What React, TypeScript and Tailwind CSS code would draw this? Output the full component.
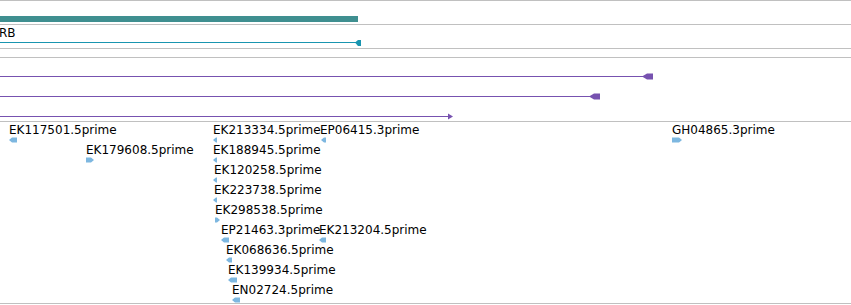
type Dir = 'left' | 'right'

interface Read {
  label: string
  x: number
  row: number
  dir: Dir
  ax: number
  aw: number
}

const reads: Read[] = [
  { label: 'EK117501.5prime', x: 9, row: 0, dir: 'left', ax: 9, aw: 8 },
  { label: 'EK213334.5prime', x: 213, row: 0, dir: 'left', ax: 213, aw: 4 },
  { label: 'EP06415.3prime', x: 320, row: 0, dir: 'left', ax: 321, aw: 5 },
  { label: 'GH04865.3prime', x: 672, row: 0, dir: 'right', ax: 672, aw: 10 },
  { label: 'EK179608.5prime', x: 86, row: 1, dir: 'right', ax: 86, aw: 8 },
  { label: 'EK188945.5prime', x: 213, row: 1, dir: 'left', ax: 213, aw: 4 },
  { label: 'EK120258.5prime', x: 214, row: 2, dir: 'left', ax: 213, aw: 4 },
  { label: 'EK223738.5prime', x: 214, row: 3, dir: 'left', ax: 213, aw: 4 },
  { label: 'EK298538.5prime', x: 215, row: 4, dir: 'right', ax: 215, aw: 5 },
  { label: 'EP21463.3prime', x: 221, row: 5, dir: 'left', ax: 221, aw: 8 },
  { label: 'EK213204.5prime', x: 319, row: 5, dir: 'left', ax: 319, aw: 7 },
  { label: 'EK068636.5prime', x: 226, row: 6, dir: 'left', ax: 226, aw: 6 },
  { label: 'EK139934.5prime', x: 228, row: 7, dir: 'left', ax: 228, aw: 9 },
  { label: 'EN02724.5prime', x: 232, row: 8, dir: 'left', ax: 232, aw: 8 },
]

function arrowPoints(x: number, y: number, w: number, dir: Dir) {
  const h = 5
  const tip = Math.min(3, w - 1)
  if (dir === 'left') {
    return `${x},${y + h / 2} ${x + tip},${y} ${x + w},${y} ${x + w},${y + h} ${x + tip},${y + h}`
  }
  return `${x},${y} ${x + w - tip},${y} ${x + w},${y + h / 2} ${x + w - tip},${y + h} ${x},${y + h}`
}

export default function App() {
  return (
    <div
      className="w-[851px] h-[305px] bg-white overflow-hidden border-t border-[#c0c0c0] text-black"
      style={{ fontFamily: '"DejaVu Sans", "Liberation Sans", sans-serif' }}
    >
      {/* gene model track */}
      <div className="relative h-[24px] border-b border-[#c0c0c0]">
        <div className="absolute left-0 top-[15px] w-[358px] h-[6px] bg-[#3f8f90]" />
      </div>

      {/* transcript track */}
      <div className="relative h-[24px] border-b border-[#c0c0c0]">
        <span className="absolute left-[-1px] top-[1px] text-[12px] leading-[14px]">RB</span>
        <svg className="absolute left-0 top-0" width="851" height="23">
          <line x1="0" y1="17.5" x2="358" y2="17.5" stroke="#1995b0" strokeWidth="1" />
          <polygon points="355,17.5 358,15 361,15 361,21 358,21" fill="#1995b0" />
        </svg>
      </div>

      <div className="h-[9px] border-b border-[#c0c0c0]" />

      {/* spliced alignments */}
      <div className="relative h-[64px] border-b border-[#c0c0c0]">
        <svg className="absolute left-0 top-0" width="851" height="63">
          <line x1="0" y1="18.5" x2="648" y2="18.5" stroke="#7752b0" strokeWidth="1" />
          <polygon points="642,18.5 647,15.5 653,15.5 653,21.5 647,21.5" fill="#7752b0" />
          <line x1="0" y1="38.5" x2="595" y2="38.5" stroke="#7752b0" strokeWidth="1" />
          <polygon points="589,38.5 594,35.5 600,35.5 600,41.5 594,41.5" fill="#7752b0" />
          <line x1="0" y1="58.5" x2="450" y2="58.5" stroke="#7752b0" strokeWidth="1" />
          <polygon points="448,55.5 453,58.5 448,61.5" fill="#7752b0" />
        </svg>
      </div>

      {/* EST reads */}
      <div className="relative h-[182px] border-b border-[#c0c0c0]">
        <svg className="absolute left-0 top-0" width="851" height="181">
          {reads.map((r) => (
            <polygon key={r.label} points={arrowPoints(r.ax, 15.5 + r.row * 20, r.aw, r.dir)} fill="#7db7e0" />
          ))}
        </svg>
        {reads.map((r) => (
          <span
            key={r.label}
            className="absolute text-[12px] leading-[14px] whitespace-nowrap"
            style={{ left: r.x, top: 1 + r.row * 20 }}
          >
            {r.label}
          </span>
        ))}
      </div>
    </div>
  )
}
